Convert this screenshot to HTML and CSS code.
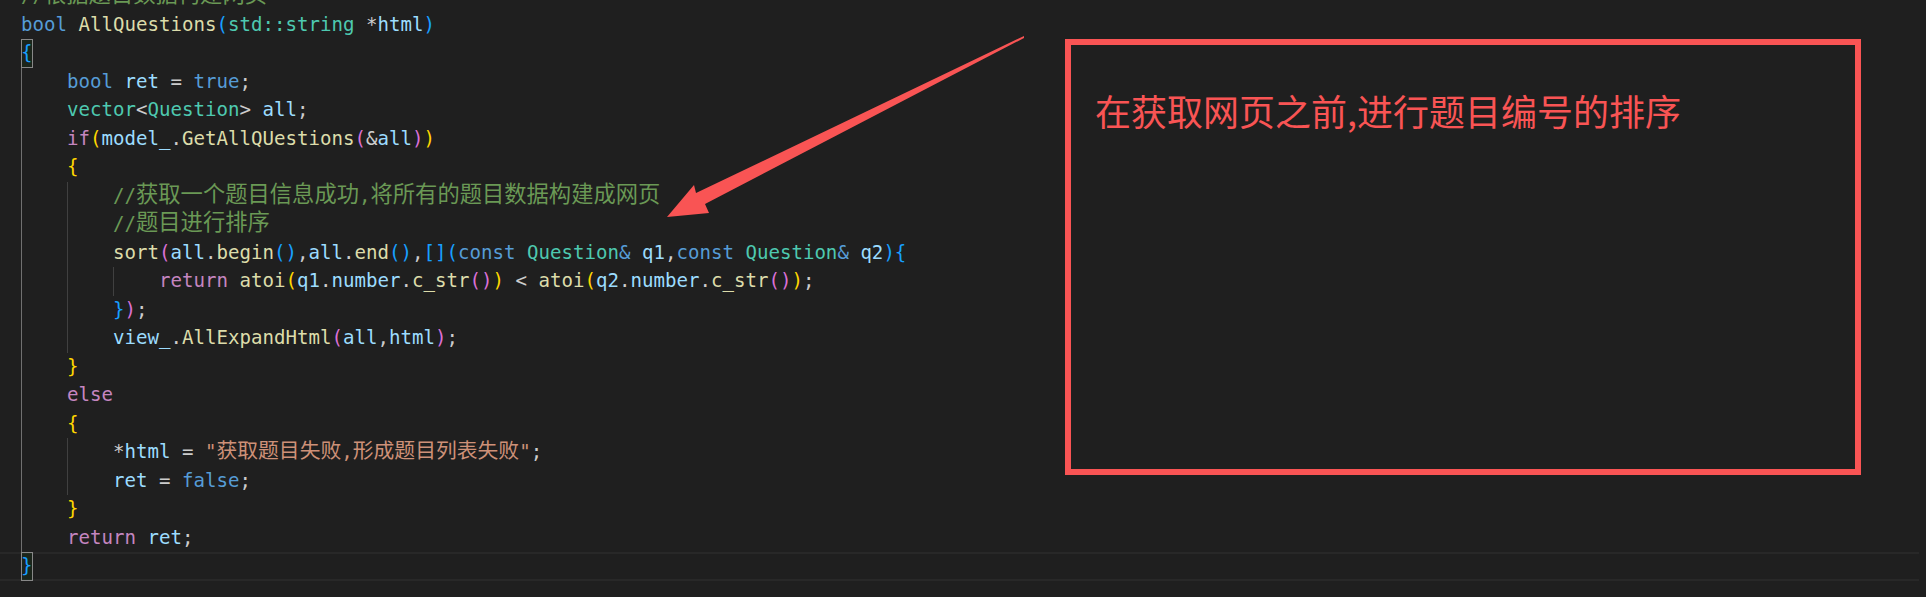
FILE: index.html
```html
<!DOCTYPE html>
<html lang="zh-CN">
<head>
<meta charset="utf-8">
<title>AllQuestions</title>
<link rel="stylesheet" href="styles.css">
</head>
<body>
<div class="editor">
  <div class="code">
    <div class="line"><span class="cm">//<span class="cj">根据题目数据构建网页</span></span></div>
    <div class="line"><span class="kw">bool</span> <span class="fn">AllQuestions</span><span class="b3">(</span><span class="ty">std::string</span> *<span class="va">html</span><span class="b3">)</span></div>
    <div class="line"><span class="mb b3">{</span></div>
    <div class="line"><span class="ind act"></span><span class="kw">bool</span> <span class="va">ret</span> = <span class="kw">true</span>;</div>
    <div class="line"><span class="ind act"></span><span class="ty">vector</span>&lt;<span class="ty">Question</span>&gt; <span class="va">all</span>;</div>
    <div class="line"><span class="ind act"></span><span class="ct">if</span><span class="b1">(</span><span class="va">model_</span>.<span class="fn">GetAllQUestions</span><span class="b2">(</span>&amp;<span class="va">all</span><span class="b2">)</span><span class="b1">)</span></div>
    <div class="line"><span class="ind act"></span><span class="b1">{</span></div>
    <div class="line"><span class="ind act"></span><span class="ind"></span><span class="cm">//<span class="cj">获取一个题目信息成功</span>,<span class="cj">将所有的题目数据构建成网页</span></span></div>
    <div class="line"><span class="ind act"></span><span class="ind"></span><span class="cm">//<span class="cj">题目进行排序</span></span></div>
    <div class="line"><span class="ind act"></span><span class="ind"></span><span class="fn">sort</span><span class="b2">(</span><span class="va">all</span>.<span class="fn">begin</span><span class="b3">()</span>,<span class="va">all</span>.<span class="fn">end</span><span class="b3">()</span>,<span class="b3">[](</span><span class="kw">const</span> <span class="ty">Question</span><span class="kw">&amp;</span> <span class="va">q1</span>,<span class="kw">const</span> <span class="ty">Question</span><span class="kw">&amp;</span> <span class="va">q2</span><span class="b3">){</span></div>
    <div class="line"><span class="ind act"></span><span class="ind"></span><span class="ind"></span><span class="ct">return</span> <span class="fn">atoi</span><span class="b1">(</span><span class="va">q1</span>.<span class="va">number</span>.<span class="fn">c_str</span><span class="b2">()</span><span class="b1">)</span> &lt; <span class="fn">atoi</span><span class="b1">(</span><span class="va">q2</span>.<span class="va">number</span>.<span class="fn">c_str</span><span class="b2">()</span><span class="b1">)</span>;</div>
    <div class="line"><span class="ind act"></span><span class="ind"></span><span class="b3">}</span><span class="b2">)</span>;</div>
    <div class="line"><span class="ind act"></span><span class="ind"></span><span class="va">view_</span>.<span class="fn">AllExpandHtml</span><span class="b2">(</span><span class="va">all</span>,<span class="va">html</span><span class="b2">)</span>;</div>
    <div class="line"><span class="ind act"></span><span class="b1">}</span></div>
    <div class="line"><span class="ind act"></span><span class="ct">else</span></div>
    <div class="line"><span class="ind act"></span><span class="b1">{</span></div>
    <div class="line"><span class="ind act"></span><span class="ind"></span>*<span class="va">html</span> = <span class="st">"<span class="cj">获取题目失败</span>,<span class="cj">形成题目列表失败</span>"</span>;</div>
    <div class="line"><span class="ind act"></span><span class="ind"></span><span class="va">ret</span> = <span class="kw">false</span>;</div>
    <div class="line"><span class="ind act"></span><span class="b1">}</span></div>
    <div class="line"><span class="ind act"></span><span class="ct">return</span> <span class="va">ret</span>;</div>
    <div class="line cur"><span class="mb b3">}</span></div>
  </div>

  <div class="note">
    <p class="note-text">在获取网页之前,进行题目编号的排序</p>
  </div>

  <svg class="arrow" width="1926" height="597" viewBox="0 0 1926 597" xmlns="http://www.w3.org/2000/svg">
    <polygon points="1024,36 696,193 694,185 667,217 709,213 705,204 1024,38" fill="#f95454"/>
  </svg>
</div>
</body>
</html>
```

FILE: styles.css
```css
html, body {
  margin: 0;
  padding: 0;
  background: #1f1f1f;
}

.editor {
  position: relative;
  width: 1926px;
  height: 597px;
  overflow: hidden;
  background: #1f1f1f;
}

.code {
  margin-top: -18px;
  padding-left: 21px;
  font-family: "DejaVu Sans Mono", "Liberation Mono", monospace;
  font-size: 19.1px;
  color: #cccccc;
}

.line {
  white-space: pre;
  height: 28.5px;
  line-height: 28.5px;
}

.line.cur {
  margin-left: -21px;
  padding-left: 21px;
  margin-right: 7px;
  box-shadow: inset 0 2px 0 #282828, inset 0 -2px 0 #282828;
}

.ind {
  display: inline-block;
  width: 46px;
  height: 28.5px;
  vertical-align: top;
  box-sizing: border-box;
  border-left: 1px solid #404040;
}

.ind.act {
  border-left-color: #707070;
}

.mb {
  display: inline-block;
  height: 28.5px;
  vertical-align: top;
  box-shadow: inset 0 0 0 1px #888888;
  background: rgba(0, 100, 0, 0.1);
}

.cj {
  font-family: "Noto Sans CJK SC", sans-serif;
  font-size: 21.5px;
  line-height: 20px;
}

.cm .cj {
  font-size: 22.3px;
}

.st .cj {
  font-size: 20.8px;
}

.kw { color: #569cd6; }
.fn { color: #dcdcaa; }
.ty { color: #4ec9b0; }
.va { color: #9cdcfe; }
.ct { color: #c586c0; }
.cm { color: #6a9955; }
.st { color: #ce9178; }
.b1 { color: #ffd700; }
.b2 { color: #da70d6; }
.b3 { color: #179fff; }

.note {
  position: absolute;
  left: 1065px;
  top: 39px;
  width: 796px;
  height: 436px;
  box-sizing: border-box;
  border: 6px solid #f95454;
  padding: 47px 0 0 24px;
}

.note-text {
  margin: 0;
  font-family: "Noto Sans CJK SC", sans-serif;
  font-size: 36px;
  line-height: 36px;
  color: #f95454;
  white-space: nowrap;
}

.arrow {
  position: absolute;
  left: 0;
  top: 0;
  pointer-events: none;
}
```
